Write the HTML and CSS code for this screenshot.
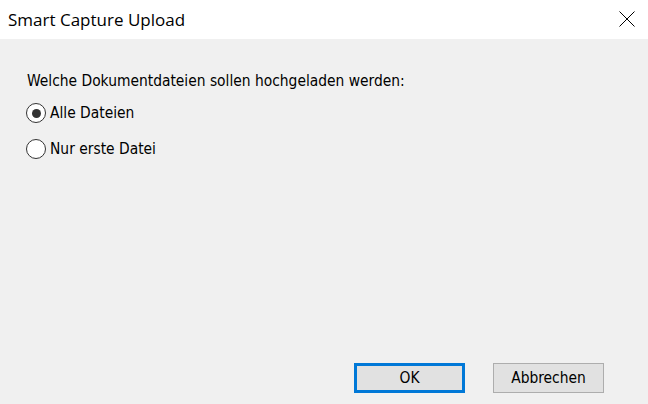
FILE: index.html
```html
<!DOCTYPE html>
<html>
<head>
<meta charset="utf-8">
<title>Smart Capture Upload</title>
<link rel="stylesheet" href="styles.css">
</head>
<body>
<div class="dialog">
  <div class="titlebar">
    <span class="title">Smart Capture Upload</span>
    <span class="close">
      <svg width="16" height="16" viewBox="0 0 16 16"><path d="M0.5 0.5 L15.5 15.5 M15.5 0.5 L0.5 15.5" stroke="#000" stroke-width="1" fill="none"/></svg>
    </span>
  </div>
  <div class="content">
    <p class="question">Welche Dokumentdateien sollen hochgeladen werden:</p>
    <div class="options">
      <label class="option"><span class="radio checked"></span>Alle Dateien</label>
      <label class="option"><span class="radio"></span>Nur erste Datei</label>
    </div>
    <div class="buttons">
      <button class="btn default">OK</button>
      <button class="btn">Abbrechen</button>
    </div>
  </div>
</div>
</body>
</html>
```
FILE: styles.css
```css
body {
   margin: 0;
   background-color: #f0f0f0;
   font-family: "DejaVu Sans Condensed", "DejaVu Sans", sans-serif;
   color: #000;
}

.dialog {
   display: flex;
   flex-direction: column;
   height: 404px;
}

.titlebar {
   height: 39px;
   background-color: white;
   display: flex;
   align-items: center;
   justify-content: space-between;
   padding: 0 13px 0 8px;
}

.title {
   font-family: "Open Sans", "Noto Sans", sans-serif;
   font-size: 17px;
   color: #000;
}

.close {
   display: flex;
   margin-top: -2px;
}

.content {
   flex: 1;
   display: flex;
   flex-direction: column;
   padding: 0 44px 11px 26px;
}

.question {
   margin: 33px 0 0 1px;
   font-size: 15.4px;
   line-height: 18px;
}

.options {
   display: flex;
   flex-direction: column;
   gap: 16px;
   margin-top: 13px;
}

.option {
   display: flex;
   align-items: center;
   gap: 4px;
   height: 20px;
   font-size: 15.4px;
}

.radio {
   width: 18px;
   height: 18px;
   border: 1px solid #333;
   border-radius: 50%;
   background-color: white;
   display: flex;
   align-items: center;
   justify-content: center;
}

.radio.checked::after {
   content: "";
   width: 9px;
   height: 9px;
   border-radius: 50%;
   background-color: #333;
}

.buttons {
   margin-top: auto;
   display: flex;
   justify-content: flex-end;
   gap: 28px;
}

.btn {
   width: 111px;
   height: 30px;
   background-color: #e1e1e1;
   border: 1px solid #adadad;
   font-family: "DejaVu Sans Condensed", "DejaVu Sans", sans-serif;
   font-size: 15.4px;
   color: #000;
   padding: 0;
}

.btn.default {
   border: 3px solid #0078d7;
}
```
